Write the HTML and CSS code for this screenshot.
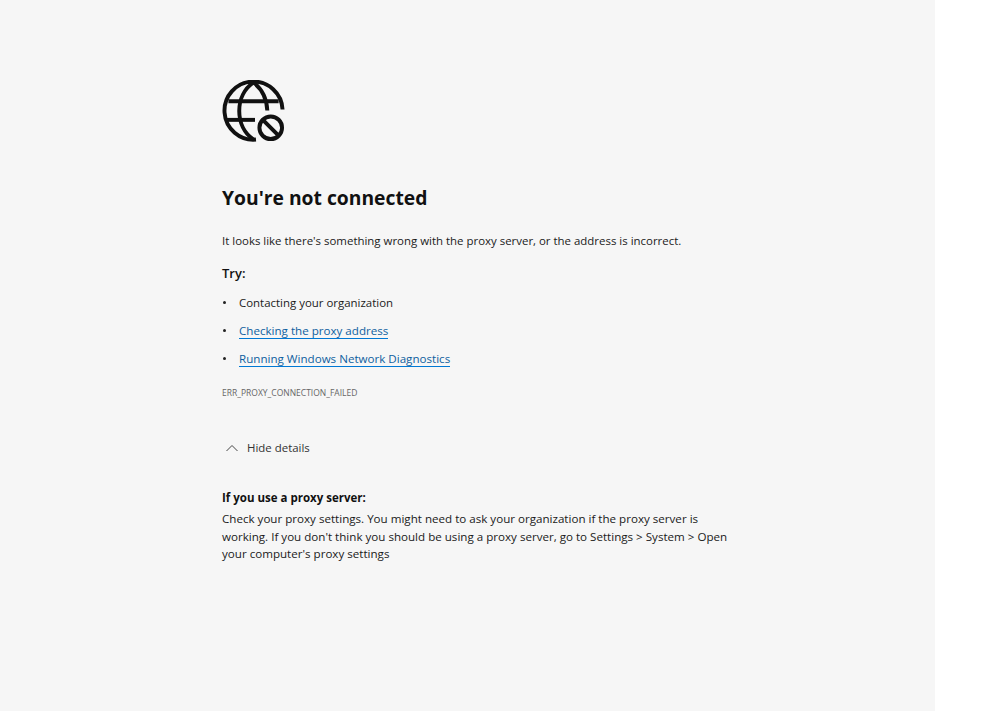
FILE: index.html
```html
<!DOCTYPE html>
<html lang="en">
<head>
  <meta charset="UTF-8" />
  <title>You're not connected</title>
  <link rel="stylesheet" href="styles.css">
</head>
<body>
  <div class="page">
    <div class="container">
      <svg class="globe" viewBox="0 0 64 64" width="64" height="63" fill="none" stroke="#111" stroke-width="4">
        <path d="M34 60.500A29.500 29.500 0 1 1 61 30" />
        <path d="M31.500 2.500C22 9 17 20 17 31.500S22 54 31.500 60.500" />
        <path d="M31.500 2.500C40 9 45 19 45.500 31" />
        <path d="M6 21.500H57" />
        <path d="M4 40.500H33" />
        <circle cx="49" cy="48.500" r="11.500" />
        <path d="M41 40.500L57 56.500" />
      </svg>
      <h1>You're not connected</h1>
      <p class="message">It looks like there's something wrong with the proxy server, or the address is incorrect.</p>
      <h2>Try:</h2>
      <ul class="try-list">
        <li>Contacting your organization</li>
        <li><a href="#">Checking the proxy address</a></li>
        <li><a href="#">Running Windows Network Diagnostics</a></li>
      </ul>
      <div class="error-code">ERR_PROXY_CONNECTION_FAILED</div>
      <button class="details-toggle" type="button">
        <svg viewBox="0 0 12 8" width="12" height="8" fill="none" stroke="#444" stroke-width="1">
          <path d="M0.500 7L6 1.500L11.500 7" />
        </svg>
        Hide details
      </button>
      <div class="details">
        <h3>If you use a proxy server:</h3>
        <p>Check your proxy settings. You might need to ask your organization if the proxy server is working. If you don't think you should be using a proxy server, go to Settings &gt; System &gt; Open your computer's proxy settings</p>
      </div>
    </div>
  </div>
</body>
</html>
```
FILE: styles.css
```css
/* Page */
html, body {
  height: 100%;
}

body {
  margin: 0;
  background: #fff;
  color: #1a1a1a;
  font-family: 'Open Sans', sans-serif;
  font-size: 11.450px;
  overflow: hidden;
}

.page {
  width: 935px;
  height: 100%;
  background: #f6f6f6;
  padding: 80px 0 0 222px;
  box-sizing: border-box;
}

.container {
  width: 512px;
}

.globe {
  display: block;
  margin-bottom: 41px;
}

h1 {
  margin: 0 0 21px;
  font-size: 19.300px;
  line-height: 27px;
  font-weight: 700;
  color: #111;
}

.message {
  margin: 0 0 15px;
  line-height: 17px;
}

h2 {
  margin: 0 0 12px;
  font-size: 13px;
  line-height: 18px;
  font-weight: 600;
  color: #111;
}

/* Suggestions */
.try-list {
  list-style: none;
  margin: 0 0 9px;
  padding: 0;
}

.try-list li {
  position: relative;
  padding-left: 17px;
  height: 28px;
  line-height: 17px;
}

.try-list li::before {
  content: "";
  position: absolute;
  left: 1px;
  top: 7px;
  width: 3px;
  height: 3px;
  border-radius: 50%;
  background: #222;
}

.try-list a {
  color: #0f5f9f;
  font-size: 11.600px;
  line-height: 15px;
  text-decoration: none;
  border-bottom: 1px solid #0078d4;
  display: inline-block;
}

.error-code {
  font-size: 8.500px;
  line-height: 12px;
  color: #666;
  margin-bottom: 40px;
}

/* Details */
.details-toggle {
  display: flex;
  align-items: center;
  gap: 9px;
  margin: 0 0 33px;
  padding: 0 0 0 4px;
  border: none;
  background: none;
  font: inherit;
  line-height: 17px;
  color: #333;
}

.details h3 {
  margin: 0 0 4px;
  font-size: 11.500px;
  line-height: 17px;
  font-weight: 700;
  color: #111;
}

.details p {
  margin: 0;
  font-size: 11.600px;
  line-height: 17.500px;
}
```
